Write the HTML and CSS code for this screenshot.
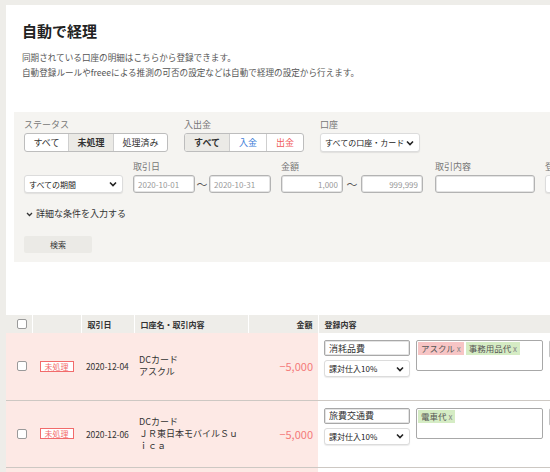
FILE: index.html
```html
<!DOCTYPE html>
<html lang="ja">
<head>
    <meta charset="UTF-8">
    <title>自動で経理</title>
    <link rel="stylesheet" href="styles.css">
</head>
<body>
    <div class="page">
        <div class="intro">
            <h1>自動で経理</h1>
            <p>同期されている口座の明細はこちらから登録できます。<br>自動登録ルールやfreeeによる推測の可否の設定などは自動で経理の設定から行えます。</p>
        </div>

        <form class="filter">
            <div class="filter-row">
                <div class="field">
                    <span class="label">ステータス</span>
                    <div class="seg">
                        <button type="button">すべて</button>
                        <button type="button" class="on">未処理</button>
                        <button type="button">処理済み</button>
                    </div>
                </div>
                <div class="field">
                    <span class="label">入出金</span>
                    <div class="seg io">
                        <button type="button" class="on">すべて</button>
                        <button type="button" class="in">入金</button>
                        <button type="button" class="out">出金</button>
                    </div>
                </div>
                <div class="field">
                    <span class="label">口座</span>
                    <div class="select account">
                        <span>すべての口座・カード</span>
                        <svg width="8" height="6" viewBox="0 0 8 6"><path d="M1 1.5l3 3 3-3" fill="none" stroke="#222" stroke-width="1.6"/></svg>
                    </div>
                </div>
            </div>

            <div class="filter-row row2">
                <div class="field">
                    <span class="label"></span>
                    <div class="select period">
                        <span>すべての期間</span>
                        <svg width="8" height="6" viewBox="0 0 8 6"><path d="M1 1.5l3 3 3-3" fill="none" stroke="#222" stroke-width="1.6"/></svg>
                    </div>
                </div>
                <div class="field">
                    <span class="label">取引日</span>
                    <div class="range">
                        <input class="input" type="text" value="2020-10-01">
                        <span class="tilde">～</span>
                        <input class="input" type="text" value="2020-10-31">
                    </div>
                </div>
                <div class="field">
                    <span class="label">金額</span>
                    <div class="range">
                        <input class="input num" type="text" value="1,000">
                        <span class="tilde wide">～</span>
                        <input class="input num" type="text" value="999,999">
                    </div>
                </div>
                <div class="field keyword">
                    <span class="label">取引内容</span>
                    <input class="input long" type="text" value="">
                </div>
                <div class="field">
                    <span class="label">登録状況</span>
                    <div class="select period">
                        <span>すべて</span>
                        <svg width="8" height="6" viewBox="0 0 8 6"><path d="M1 1.5l3 3 3-3" fill="none" stroke="#222" stroke-width="1.6"/></svg>
                    </div>
                </div>
            </div>

            <div class="more">
                <svg width="7" height="5" viewBox="0 0 7 5"><path d="M1 1l2.5 2.5L6 1" fill="none" stroke="#333" stroke-width="1.3"/></svg>
                <span>詳細な条件を入力する</span>
            </div>

            <button type="button" class="search">検索</button>
        </form>

        <table class="deals">
            <colgroup>
                <col class="c-check">
                <col class="c-status">
                <col class="c-date">
                <col class="c-name">
                <col class="c-amount">
                <col>
            </colgroup>
            <thead>
                <tr>
                    <th class="chk"><span class="check"></span></th>
                    <th></th>
                    <th>取引日</th>
                    <th>口座名・取引内容</th>
                    <th class="amt">金額</th>
                    <th>登録内容</th>
                </tr>
            </thead>
            <tbody>
                <tr>
                    <td class="chk"><span class="check"></span></td>
                    <td class="status"><span class="badge">未処理</span></td>
                    <td class="date">2020-12-04</td>
                    <td>
                        <div class="acct">DCカード</div>
                        <div class="desc">アスクル</div>
                    </td>
                    <td class="amt">−5,000</td>
                    <td class="reg">
                        <div class="reg-wrap">
                            <div class="reg-col">
                                <input class="input item" type="text" value="消耗品費">
                                <div class="select tax">
                                    <span>課対仕入10%</span>
                                    <svg width="8" height="6" viewBox="0 0 8 6"><path d="M1 1.5l3 3 3-3" fill="none" stroke="#222" stroke-width="1.6"/></svg>
                                </div>
                            </div>
                            <div class="tags">
                                <span class="tag red">アスクル <i>x</i></span>
                                <span class="tag green">事務用品代 <i>x</i></span>
                            </div>
                            <div class="extra"></div>
                        </div>
                    </td>
                </tr>
                <tr>
                    <td class="chk"><span class="check"></span></td>
                    <td class="status"><span class="badge">未処理</span></td>
                    <td class="date">2020-12-06</td>
                    <td>
                        <div class="acct">DCカード</div>
                        <div class="desc">ＪＲ東日本モバイルＳｕｉｃａ</div>
                    </td>
                    <td class="amt">−5,000</td>
                    <td class="reg">
                        <div class="reg-wrap">
                            <div class="reg-col">
                                <input class="input item" type="text" value="旅費交通費">
                                <div class="select tax">
                                    <span>課対仕入10%</span>
                                    <svg width="8" height="6" viewBox="0 0 8 6"><path d="M1 1.5l3 3 3-3" fill="none" stroke="#222" stroke-width="1.6"/></svg>
                                </div>
                            </div>
                            <div class="tags">
                                <span class="tag green">電車代 <i>x</i></span>
                            </div>
                            <div class="extra"></div>
                        </div>
                    </td>
                </tr>
                <tr>
                    <td class="chk"><span class="check"></span></td>
                    <td class="status"><span class="badge">未処理</span></td>
                    <td class="date">2020-12-08</td>
                    <td>
                        <div class="acct">DCカード</div>
                        <div class="desc">アマゾン</div>
                    </td>
                    <td class="amt">−3,200</td>
                    <td class="reg"></td>
                </tr>
            </tbody>
        </table>
    </div>
</body>
</html>
```

FILE: styles.css
```css
body {
    margin: 0;
    background: #eeede9;
    font-family: "Noto Sans CJK JP", "Noto Sans", sans-serif;
    font-size: 9px;
    color: #333;
    overflow: hidden;
}
.page {
    margin: 5px 0 0 6px;
    width: 1000px;
    background: #fff;
}

/* heading */
.intro {
    padding: 15px 16px 0;
}
.intro h1 {
    margin: 0;
    font-size: 15px;
    line-height: 22px;
    font-weight: bold;
    color: #222;
}
.intro p {
    margin: 8px 0 0;
    font-size: 8.6px;
    line-height: 15px;
    color: #555;
}

/* search form */
.filter {
    margin: 32px 0 0 8px;
    padding: 7px 10px 9px;
    background: #f5f4f1;
}
.filter-row {
    display: flex;
    align-items: flex-end;
    gap: 16px;
}
.filter-row.row2 {
    margin-top: 9px;
    gap: 10px;
}
.field {
    display: flex;
    flex-direction: column;
}
.field.keyword {
    margin-left: 2px;
}
.label {
    height: 12px;
    line-height: 12px;
    margin-bottom: 2px;
    color: #777;
}
.seg {
    display: flex;
    height: 19px;
    box-sizing: border-box;
    border: 1px solid #bdbdbd;
    border-radius: 3px;
    background: #fff;
    overflow: hidden;
}
.seg button {
    border: 0;
    border-left: 1px solid #cfcfcf;
    background: none;
    padding: 0 8.5px;
    font: inherit;
    color: #333;
}
.seg.io button {
    padding: 0 9px;
}
.seg button:first-child {
    border-left: 0;
}
.seg .on {
    background: #ebeae6;
    font-weight: bold;
}
.seg .in {
    color: #3b7dd8;
}
.seg .out {
    color: #f05a5a;
}
.select {
    display: flex;
    align-items: center;
    justify-content: space-between;
    box-sizing: border-box;
    height: 19px;
    padding: 0 5px 0 4px;
    border: 1px solid #dcdcdc;
    border-radius: 3px;
    background: #fff;
    box-shadow: 0 1px 1px rgba(0, 0, 0, 0.08);
    font-size: 8px;
    color: #222;
}
.select.account {
    width: 100px;
}
.select.period {
    width: 99px;
    height: 18px;
}
.range {
    display: flex;
    align-items: center;
}
.input {
    box-sizing: border-box;
    width: 62px;
    height: 18px;
    margin: 0;
    padding: 0 4px;
    border: 1px solid #b3b3b3;
    border-radius: 3px;
    background: #fff;
    box-shadow: inset 0 0 0 1px #e4e4e4;
    font: inherit;
    font-size: 8px;
    color: #999;
    outline: none;
}
.input.num {
    text-align: right;
}
.input.long {
    width: 100px;
}
.tilde {
    width: 14px;
    text-align: center;
    font-size: 11px;
    color: #555;
}
.tilde.wide {
    width: 18px;
}
.more {
    display: flex;
    align-items: center;
    gap: 3px;
    margin: 15px 0 0 2px;
    line-height: 12px;
}
.search {
    display: block;
    margin-top: 16px;
    width: 68px;
    height: 17px;
    border: 0;
    border-radius: 2px;
    background: #ebeae6;
    font: inherit;
    font-size: 8px;
    color: #333;
}

/* deals table */
.deals {
    margin-top: 53px;
    width: 1000px;
    border-collapse: collapse;
    table-layout: fixed;
}
.c-check { width: 26px; }
.c-status { width: 49px; }
.c-date { width: 53px; }
.c-name { width: 114px; }
.c-amount { width: 70px; }
.deals th {
    height: 18px;
    padding: 0 6px;
    background: #eeede9;
    border-left: 1px solid #fff;
    text-align: left;
    font-size: 8px;
    font-weight: bold;
    color: #333;
}
.deals th:first-child {
    border-left: 0;
}
.deals tbody tr {
    height: 67px;
}
.deals td {
    padding: 0 5px;
    background: #fde9e5;
    border-bottom: 1px solid #cdc8c3;
    vertical-align: middle;
}
.deals .chk {
    padding: 0 0 0 11px;
}
.deals .status {
    text-align: center;
}
.deals td.date {
    white-space: nowrap;
    font-size: 8.5px;
    letter-spacing: -0.1px;
}
.deals th.amt,
.deals td.amt {
    text-align: right;
    padding-right: 5px;
}
.deals td.amt {
    font-size: 11px;
    color: #f47a7a;
}
.check {
    display: block;
    box-sizing: border-box;
    width: 10px;
    height: 10px;
    border: 1px solid #9a9a9a;
    border-radius: 2px;
    background: #fff;
}
.badge {
    display: inline-block;
    padding: 0 4px;
    border: 1px solid #f26b6b;
    background: #fff;
    font-size: 8px;
    line-height: 9px;
    color: #f26b6b;
}
.acct {
    font-size: 9px;
    line-height: 12px;
}
.desc {
    font-size: 9px;
    line-height: 12px;
    color: #333;
}
.deals td.reg {
    padding: 7px 6px 0;
    background: #fff;
    vertical-align: top;
}
.reg-wrap {
    display: flex;
    align-items: flex-start;
    gap: 6px;
}
.reg-col {
    display: flex;
    flex-direction: column;
    gap: 4px;
    width: 86px;
}
.input.item {
    width: 86px;
    height: 16px;
    border-color: #a8a8a8;
    border-radius: 2px;
    font-size: 9px;
    color: #333;
}
.select.tax {
    width: 86px;
    height: 17px;
}
.tags {
    display: flex;
    align-items: flex-start;
    gap: 2px;
    box-sizing: border-box;
    width: 127px;
    height: 31px;
    padding: 1px;
    border: 1px solid #a8a8a8;
    border-radius: 2px;
    background: #fff;
}
.tag {
    padding: 0 3px;
    font-size: 8.5px;
    line-height: 12px;
    color: #555;
}
.tag i {
    font-style: normal;
    font-size: 8px;
    color: #888;
}
.tag.red {
    background: #f7c5c5;
}
.tag.green {
    background: #d5ecc4;
}
.extra {
    width: 20px;
    height: 16px;
    border: 1px solid #c4c4c4;
    border-radius: 2px;
}
```
